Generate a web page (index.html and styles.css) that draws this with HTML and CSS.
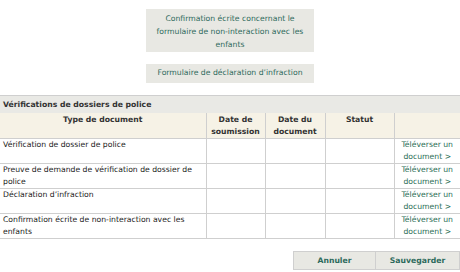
FILE: index.html
```html
<!DOCTYPE html>
<html>
<head>
    <title>Vérifications de dossiers de police</title>
    <meta charset="utf-8" />
    <link rel="stylesheet" href="styles.css">
</head>
<body>
    <div class="formulaires">
        <a class="formulaire haut" href="#">Confirmation écrite concernant le formulaire de non-interaction avec les enfants</a>
        <a class="formulaire" href="#">Formulaire de déclaration d’infraction</a>
    </div>

    <div class="section">
        <div class="titre">Vérifications de dossiers de police</div>
        <table class="docs">
            <colgroup>
                <col class="c-type"><col class="c-soum"><col class="c-date"><col class="c-statut"><col class="c-action">
            </colgroup>
            <tr>
                <th>Type de document</th>
                <th>Date de soumission</th>
                <th>Date du document</th>
                <th>Statut</th>
                <th></th>
            </tr>
            <tr>
                <td>Vérification de dossier de police</td>
                <td></td><td></td><td></td>
                <td class="action"><a href="#">Téléverser un document &gt;</a></td>
            </tr>
            <tr>
                <td>Preuve de demande de vérification de dossier de police</td>
                <td></td><td></td><td></td>
                <td class="action"><a href="#">Téléverser un document &gt;</a></td>
            </tr>
            <tr>
                <td>Déclaration d’infraction</td>
                <td></td><td></td><td></td>
                <td class="action"><a href="#">Téléverser un document &gt;</a></td>
            </tr>
            <tr>
                <td>Confirmation écrite de non-interaction avec les enfants</td>
                <td></td><td></td><td></td>
                <td class="action"><a href="#">Téléverser un document &gt;</a></td>
            </tr>
        </table>
    </div>

    <div class="boutons">
        <button class="bouton annuler">Annuler</button>
        <button class="bouton sauver">Sauvegarder</button>
    </div>
</body>
</html>
```
FILE: styles.css
```css
body {
    margin: 0;
    background: #fff;
    color: #222;
    font: 7.7px/12px "DejaVu Sans", Verdana, sans-serif;}

.formulaires {
    display: flex;
    flex-direction: column;
    align-items: center;
    gap: 12px;
    padding-top: 9px;}
.formulaire {
    display: block;
    box-sizing: border-box;
    width: 168px;
    height: 19px;
    padding: 3px 4px 4px;
    background: #e8e8e3;
    color: #2d6a5c;
    text-align: center;
    text-decoration: none;
    line-height: 12px;}
.formulaire.haut {height: 43px; padding: 3px 4px 1px; line-height: 13px;}

.section {
    margin-top: 12px;
    border-top: 1px solid #cfcfcf;}
.titre {
    background: #e9e9e5;
    font-weight: bold;
    color: #333;
    padding: 3px 3px 1px;
    height: 13px;}

.docs {
    width: 460px;
    border-collapse: collapse;
    table-layout: fixed;}
.c-type {width: 206px;}
.c-soum {width: 59px;}
.c-date {width: 60px;}
.c-statut {width: 69px;}
.c-action {width: 66px;}
.docs th, .docs td {
    border: 1px solid #cfcfcf;
    vertical-align: top;
    padding: 0 3px;}
.docs tr > :first-child {border-left: none;}
.docs tr > :last-child {border-right: none;}
.docs th {
    background: #f6f2e6;
    color: #333;
    font-weight: bold;
    text-align: center;
    border-top: none;
    padding-top: 1px;}
.docs td.action {
    text-align: center;
    padding: 0 1px;}
.docs td.action a {
    color: #2a6e55;
    text-decoration: none;}

.boutons {
    display: flex;
    justify-content: flex-end;
    margin-top: 12px;}
.bouton {
    height: 19px;
    margin: 0;
    border: 1px solid #cfcfcf;
    background: #e8e8e3;
    color: #2d6a5c;
    font: bold 7.7px "DejaVu Sans", Verdana, sans-serif;}
.annuler {width: 83px;}
.sauver {width: 84px; border-left: none;}
```
